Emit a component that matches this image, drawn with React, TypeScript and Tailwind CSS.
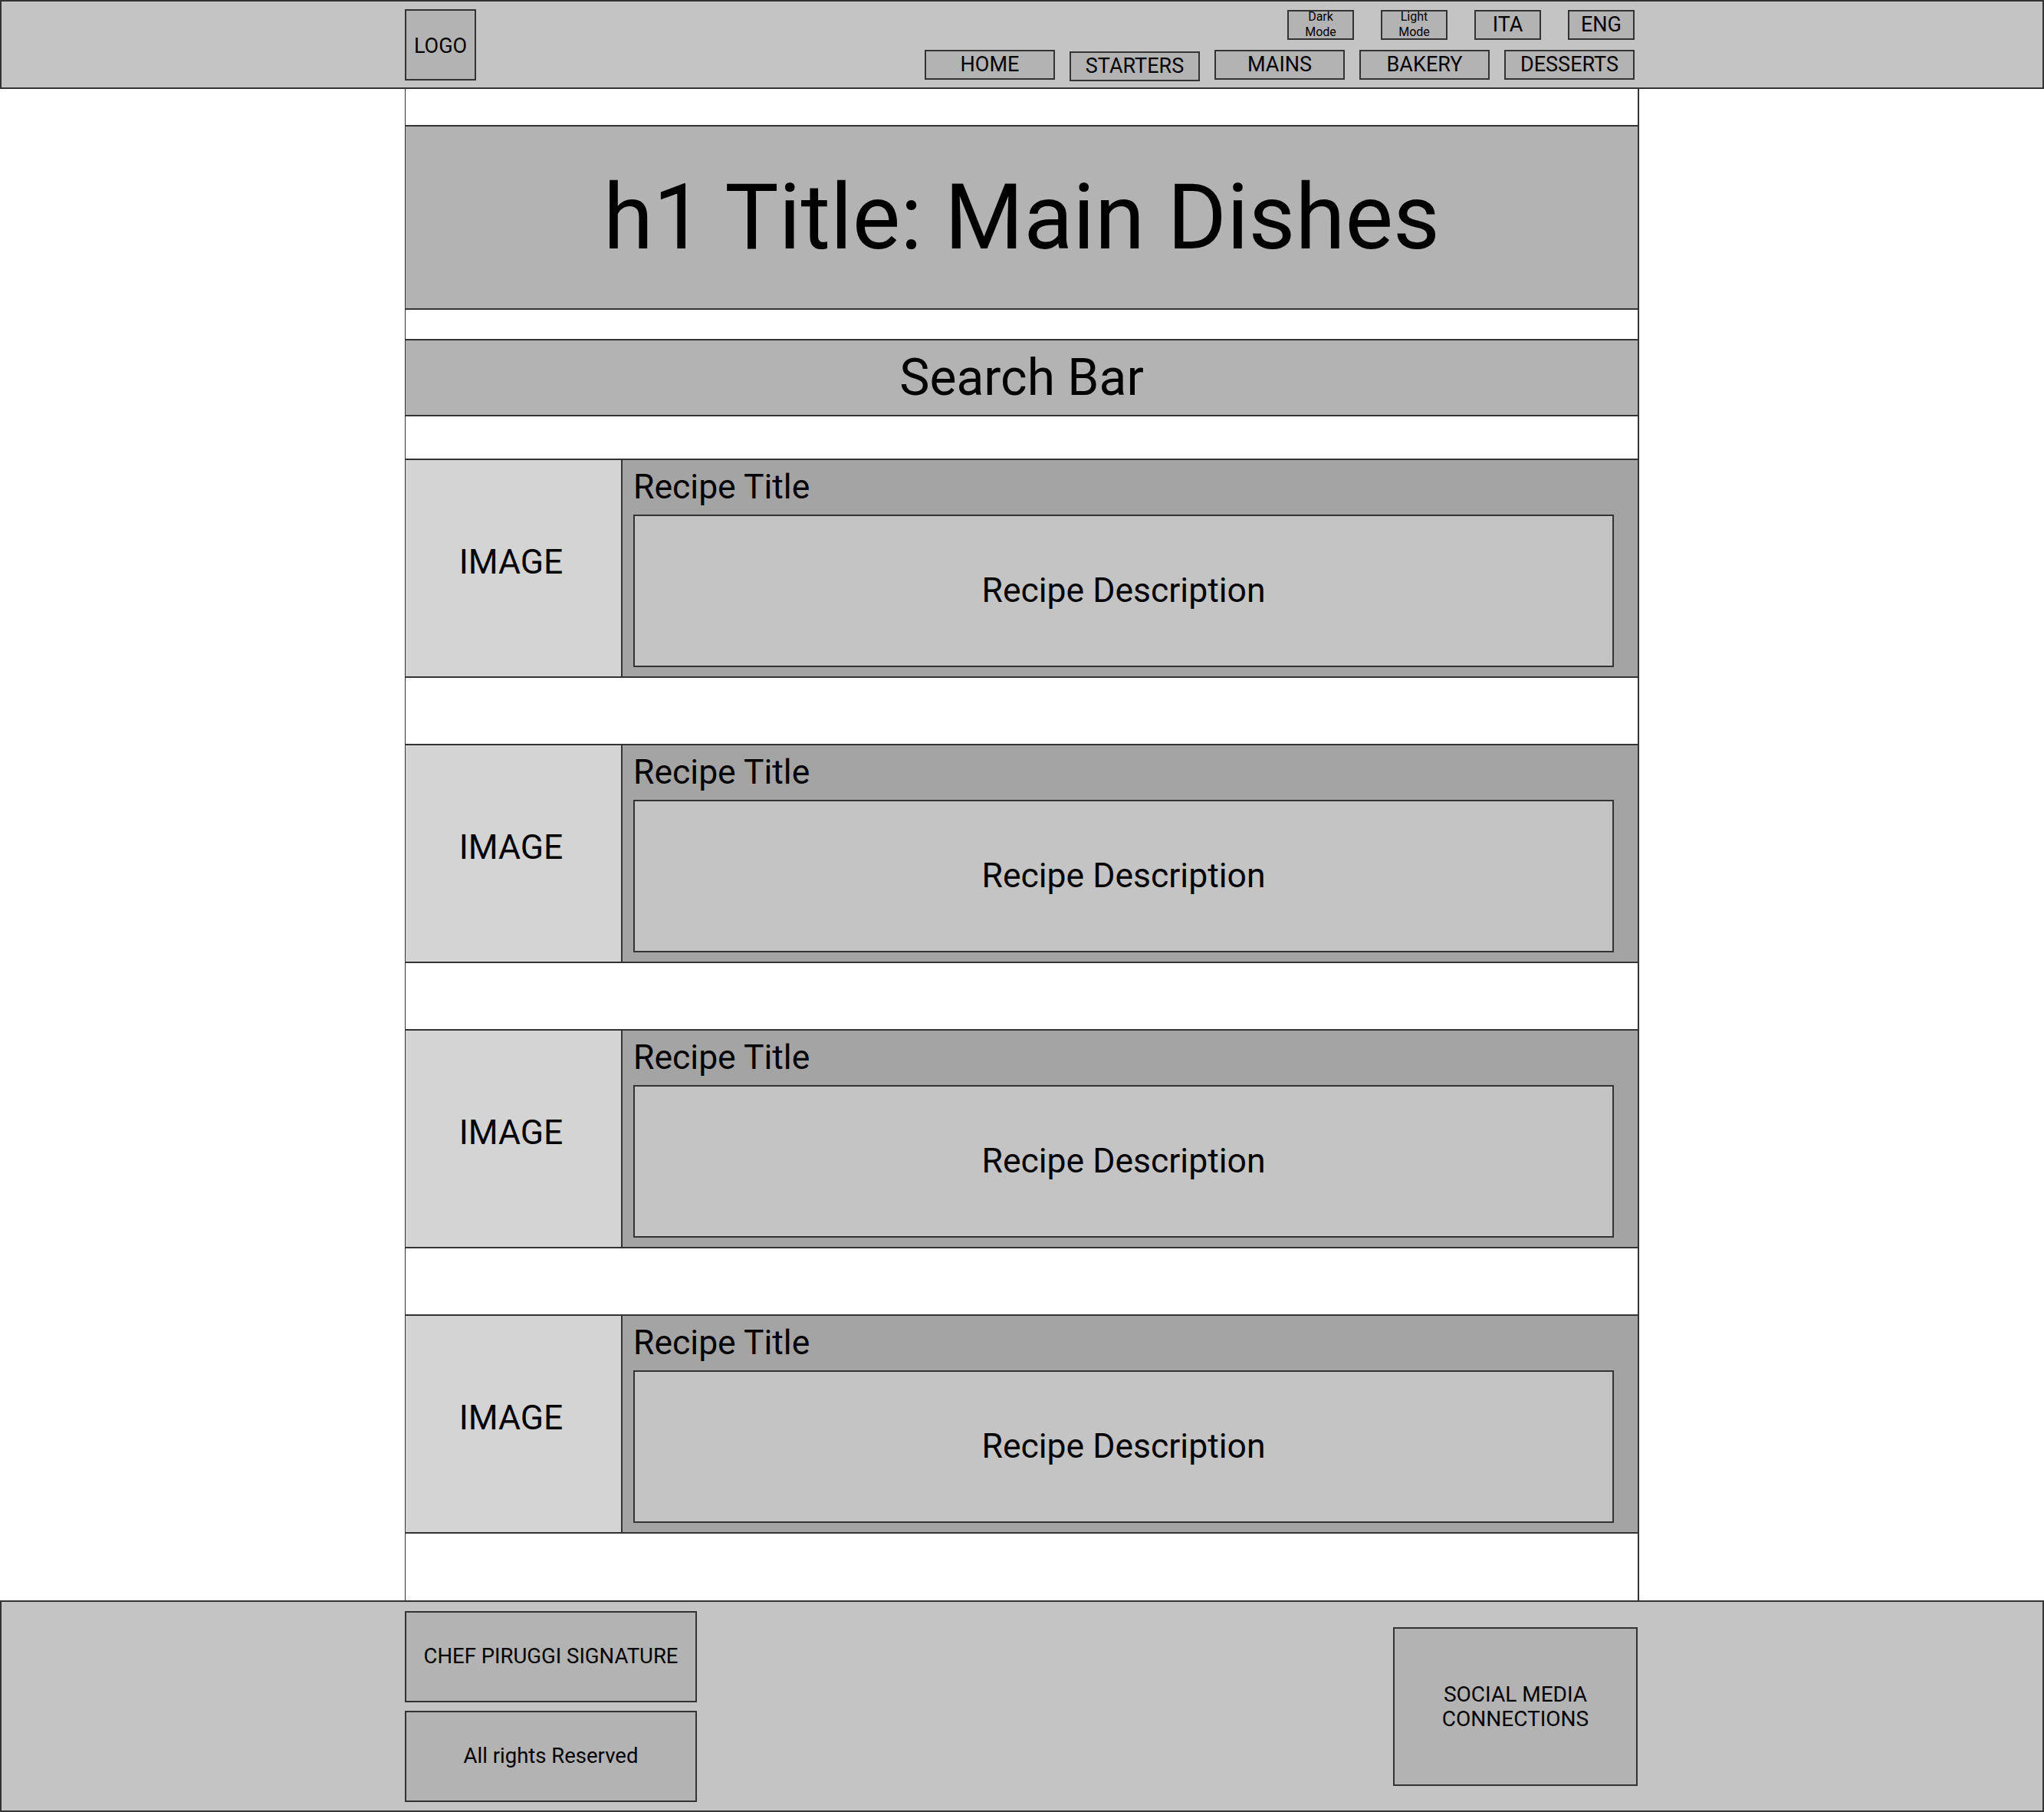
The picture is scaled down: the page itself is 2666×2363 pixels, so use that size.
import React from "react";

const font = { fontFamily: "Roboto, 'Liberation Sans', sans-serif" };

function TopBtn({ children }: { children: React.ReactNode }) {
  return (
    <div className="w-[87px] h-[39px] bg-[#b3b3b3] border-2 border-[#333] flex items-center justify-center text-center text-[27px] leading-[21px] text-black">
      {children}
    </div>
  );
}

function ModeBtn({ a, b }: { a: string; b: string }) {
  return (
    <div className="w-[87px] h-[39px] bg-[#b3b3b3] border-2 border-[#333] flex flex-col items-center justify-center text-center text-[16px] leading-[20px] text-black pb-[1px]">
      <span>{a}</span>
      <span>{b}</span>
    </div>
  );
}

function NavBtn({ children, low }: { children: React.ReactNode; low?: boolean }) {
  return (
    <div
      className={
        low
          ? "w-[170px] h-[39px] bg-[#b3b3b3] border-2 border-[#333] flex items-center justify-center text-[27px] text-black translate-y-[2px]"
          : "w-[170px] h-[39px] bg-[#b3b3b3] border-2 border-[#333] flex items-center justify-center text-[27px] text-black"
      }
    >
      {children}
    </div>
  );
}

function Card({ first }: { first?: boolean }) {
  return (
    <div
      className={
        (first ? "mt-[55px] " : "mt-[86px] ") +
        "h-[286px] flex border-y-2 border-[#333]"
      }
    >
      <div className="w-[283px] shrink-0 bg-[#d4d4d4] border-r-2 border-[#333] flex items-center justify-center text-[44.5px] text-black pb-[16px] pr-[6px]">
        IMAGE
      </div>
      <div className="flex-1 bg-[#a4a4a4] pl-[14px] pr-[31px] pt-[10px] pb-[12px] flex flex-col">
        <div className="text-[44.5px] leading-[50px] text-black">Recipe Title</div>
        <div className="mt-[11px] flex-1 bg-[#c4c4c4] border-2 border-[#333] flex items-center justify-center text-[44.5px] text-black">
          Recipe Description
        </div>
      </div>
    </div>
  );
}

export default function App() {
  return (
    <div className="w-[2666px] min-h-[2363px] bg-white" style={font}>
      {/* Header */}
      <header className="h-[116px] bg-[#c4c4c4] border-2 border-[#333]">
        <div className="w-[1610px] mx-auto h-full flex items-center justify-between pr-[6px]">
          <div className="w-[93px] h-[93px] bg-[#b3b3b3] border-2 border-[#333] flex items-center justify-center text-[27px] text-black pt-[4px]">
            LOGO
          </div>
          <div className="flex flex-col items-end gap-[13px]">
            <div className="flex gap-[35px]">
              <ModeBtn a="Dark" b="Mode" />
              <ModeBtn a="Light" b="Mode" />
              <TopBtn>ITA</TopBtn>
              <TopBtn>ENG</TopBtn>
            </div>
            <div className="flex gap-[19px]">
              <NavBtn>HOME</NavBtn>
              <NavBtn low>STARTERS</NavBtn>
              <NavBtn>MAINS</NavBtn>
              <NavBtn>BAKERY</NavBtn>
              <NavBtn>DESSERTS</NavBtn>
            </div>
          </div>
        </div>
      </header>

      {/* Main column */}
      <main className="w-[1610px] mx-auto border-l border-r-2 border-[#333] bg-white flex flex-col pb-[87px]">
        <div className="mt-[47px] h-[241px] bg-[#b3b3b3] border-y-2 border-[#333] flex items-center justify-center">
          <h1 className="text-[118px] leading-none text-black font-normal">h1 Title: Main Dishes</h1>
        </div>
        <div className="mt-[38px] h-[101px] bg-[#b3b3b3] border-y-2 border-[#333] flex items-center justify-center">
          <span className="text-[66px] text-black">Search Bar</span>
        </div>
        <Card first />
        <Card />
        <Card />
        <Card />
      </main>

      {/* Footer */}
      <footer className="bg-[#c4c4c4] border-2 border-[#333] pt-[12px] pb-[11px]">
        <div className="w-[1610px] mx-auto flex items-center justify-between pr-[2px]">
          <div className="flex flex-col gap-[11px]">
            <div className="w-[381px] h-[119px] bg-[#b3b3b3] border-2 border-[#333] flex items-center justify-center text-[27.5px] text-black pb-[2px]">
              CHEF PIRUGGI SIGNATURE
            </div>
            <div className="w-[381px] h-[119px] bg-[#b3b3b3] border-2 border-[#333] flex items-center justify-center text-[27.5px] text-black pb-[2px]">
              All rights Reserved
            </div>
          </div>
          <div className="w-[319px] h-[207px] bg-[#b3b3b3] border-2 border-[#333] flex flex-col items-center justify-center text-center text-[28px] leading-[32px] text-black">
            <span>SOCIAL MEDIA</span>
            <span>CONNECTIONS</span>
          </div>
        </div>
      </footer>
    </div>
  );
}
